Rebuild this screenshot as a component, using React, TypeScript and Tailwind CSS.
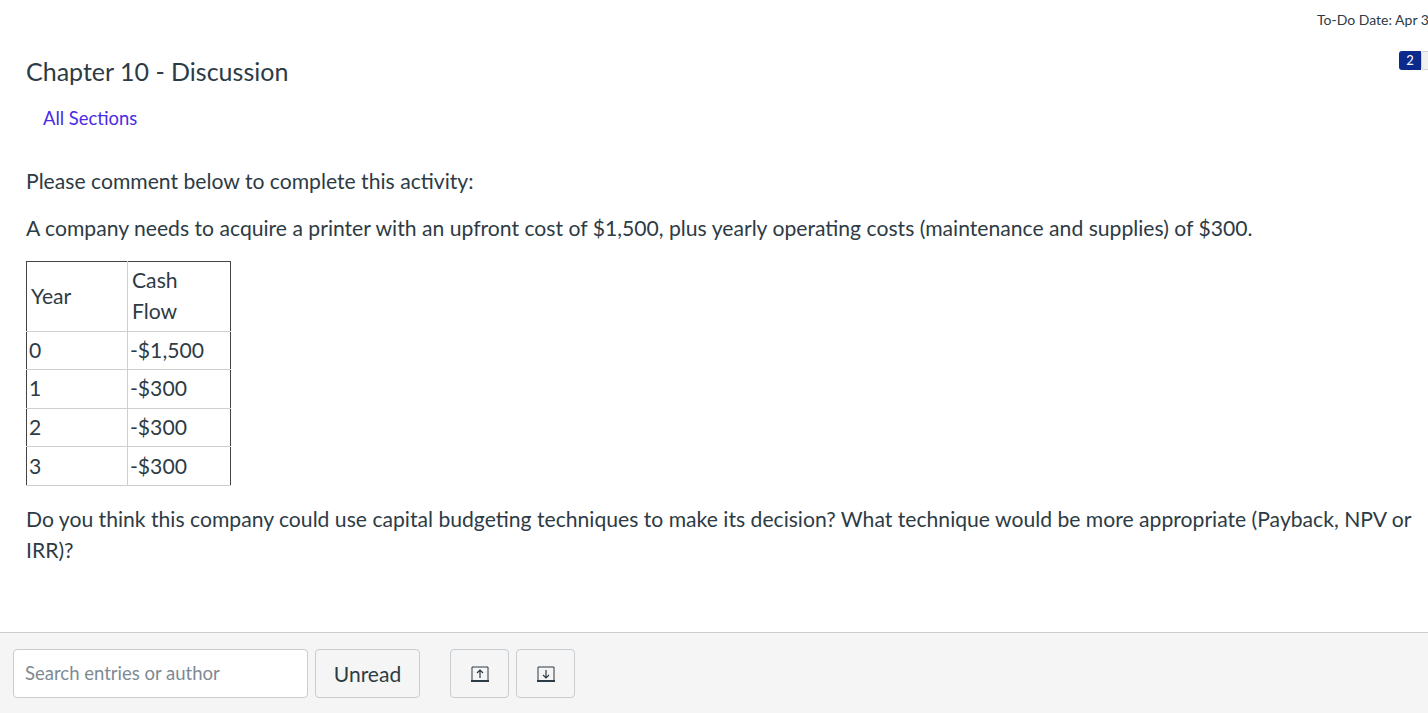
import React from "react";

function UpIcon() {
  return (
    <svg width="22" height="20" viewBox="0 0 22 20" fill="none">
      <path d="M3 16V3h16v13" stroke="#2d3b45" strokeWidth="1" />
      <path d="M2 17h18" stroke="#2d3b45" strokeWidth="2" />
      <path d="M11 14V6M8 9l3-3 3 3" stroke="#2d3b45" strokeWidth="1.2" />
    </svg>
  );
}

function DownIcon() {
  return (
    <svg width="22" height="20" viewBox="0 0 22 20" fill="none">
      <path d="M3 16V3h16v13" stroke="#2d3b45" strokeWidth="1" />
      <path d="M2 17h18" stroke="#2d3b45" strokeWidth="2" />
      <path d="M11 6v8M8 11l3 3 3-3" stroke="#2d3b45" strokeWidth="1.2" />
    </svg>
  );
}

const rows = [
  ["0", "-$1,500"],
  ["1", "-$300"],
  ["2", "-$300"],
  ["3", "-$300"],
];

export default function App() {
  return (
    <div
      className="w-[1428px] h-[713px] overflow-hidden bg-white flex flex-col text-[#2d3b45]"
      style={{ fontFamily: "Lato, 'Noto Sans', sans-serif" }}
    >
      <div className="flex-1 flex flex-col">
        <div className="pt-[10px] pl-[1317px] whitespace-nowrap text-[14px] leading-[20px] overflow-hidden">
          To-Do Date: Apr 3, 2023 at 11:59pm
        </div>
        <div className="flex justify-between items-start mt-[21px] pl-[26px]">
          <h1 className="text-[25px] leading-[36px] mt-[2px] font-normal">Chapter 10 - Discussion</h1>
          <div className="flex items-center mr-[-10px]">
            <span className="bg-[#0b2a8c] text-white text-[13px] leading-[19px] w-[22px] text-center rounded-l-[3px]">2</span>
            <span className="bg-[#f0f0f0] border border-[#d0d0d0] w-[17px] h-[19px] rounded-[3px]"></span>
          </div>
        </div>
        <div className="pl-[43px] mt-[16px] text-[18.4px] leading-[27px] text-[#4a2be6]">All Sections</div>
        <div className="pl-[26px] pr-[10px] mt-[34px] text-[21.15px] leading-[31px]">
          <p>Please comment below to complete this activity:</p>
          <p className="mt-[16px]">
            A company needs to acquire a printer with an upfront cost of $1,500, plus yearly operating costs (maintenance and supplies) of $300.
          </p>
          <table className="mt-[17px] w-[204px] table-fixed border-collapse border border-[#444]">
            <colgroup>
              <col className="w-[101px]" />
              <col className="w-[103px]" />
            </colgroup>
            <tbody>
              <tr>
                <td className="border border-[#cfcfcf] border-l-[#444] border-t-[#444] pl-[4px] pr-[6px] py-[3.3px] align-middle">Year</td>
                <td className="border border-[#cfcfcf] border-r-[#444] border-t-[#444] pl-[4px] pr-[8px] py-[3.3px]">Cash Flow</td>
              </tr>
              {rows.map(([y, c]) => (
                <tr key={y}>
                  <td className="border border-[#cfcfcf] border-l-[#444] px-[2px] py-[3.3px]">{y}</td>
                  <td className="border border-[#cfcfcf] border-r-[#444] px-[2px] py-[3.3px]">{c}</td>
                </tr>
              ))}
            </tbody>
          </table>
          <p className="mt-[18px]">
            Do you think this company could use capital budgeting techniques to make its decision? What technique would be more appropriate (Payback, NPV or IRR)?
          </p>
        </div>
      </div>
      <div className="h-[81px] border-t border-[#c7cdd1] bg-[#f5f5f5] flex items-start pt-[16px] pl-[13px]">
        <div className="w-[295px] h-[49px] bg-white border border-[#c7cdd1] rounded-[4px] flex items-center pl-[11px] text-[18.5px] text-[#7d8a93]">
          Search entries or author
        </div>
        <div className="ml-[7px] w-[105px] h-[49px] bg-[#f5f5f5] border border-[#c7cdd1] rounded-[4px] flex items-center justify-center text-[21px]">
          Unread
        </div>
        <div className="ml-[30px] w-[59px] h-[49px] bg-[#f5f5f5] border border-[#c7cdd1] rounded-[4px] flex items-center justify-center">
          <UpIcon />
        </div>
        <div className="ml-[7px] w-[59px] h-[49px] bg-[#f5f5f5] border border-[#c7cdd1] rounded-[4px] flex items-center justify-center">
          <DownIcon />
        </div>
      </div>
    </div>
  );
}
